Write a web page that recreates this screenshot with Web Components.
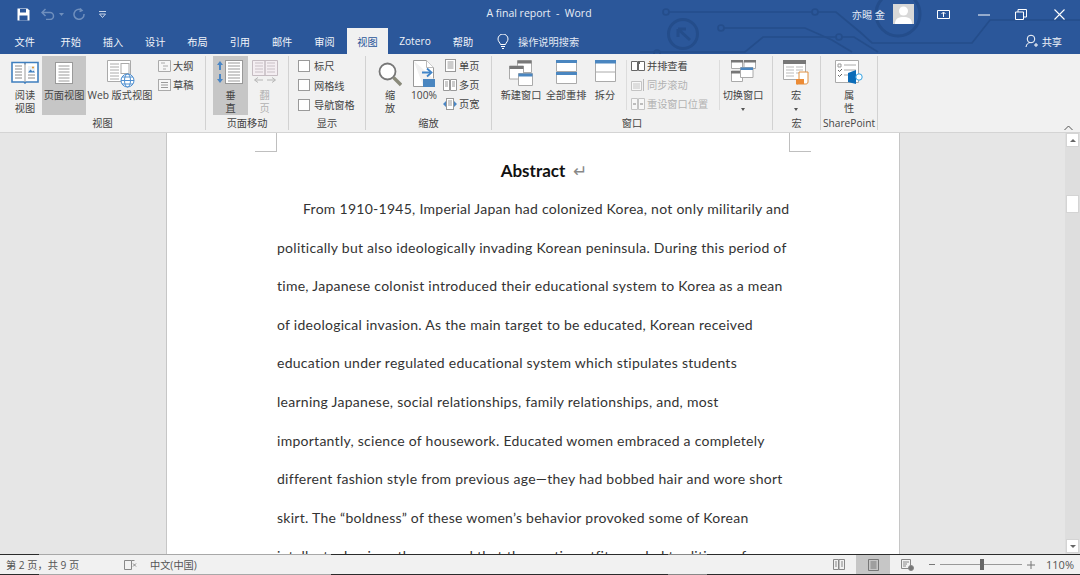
<!DOCTYPE html>
<html lang="zh"><head><meta charset="utf-8"><title>A final report - Word</title>
<style>
html,body{margin:0;padding:0;width:1080px;height:575px;overflow:hidden;background:#f1f1f1}
body{font-family:"Open Sans","Noto Sans CJK SC",sans-serif;color:#444;display:flex;flex-direction:column}
</style></head><body>
<w-header></w-header>
<w-ribbon></w-ribbon>
<w-doc></w-doc>
<w-status></w-status>
<script>
const ICONS={
read:`<svg width="28" height="24" viewBox="0 0 28 24"><path d="M1 2.500h12.500l.5 1 .5-1H27V22H15l-1 1-1-1H1z" fill="#fff" stroke="#3f7fbf" stroke-width="1.600"/><path d="M14 3v19" stroke="#999"/><path d="M4 6h7M4 9h7M4 12h7M4 15h7M4 18h7M17 15h7M17 18h7" stroke="#8a8a8a"/><rect x="17" y="6" width="7" height="6.500" fill="#e8f0f8"/><path d="M17 12.500l2.500-3 2 2 1-1 1.500 2z" fill="#3f7fbf"/><circle cx="22" cy="7.500" r="1.100" fill="#e29b3b"/></svg>`,
page:`<svg style="margin-top:2px" width="18" height="22" viewBox="0 0 18 22"><rect x=".5" y=".5" width="17" height="21" fill="#fff" stroke="#9a9a9a"/><path d="M3.500 4h11M3.500 7h11M3.500 10h11M3.500 13h11M3.500 16h11M3.500 19h11" stroke="#9a9a9a"/></svg>`,
web:`<svg style="margin-left:2px" width="28" height="28" viewBox="0 0 28 28"><path d="M.5.500h23v21H.5z" fill="#fff" stroke="#aaa"/><path d="M3 4h9M3 7h9M3 10h9M3 13h9M3 16h9M3 19h9" stroke="#aaa"/><rect x="14" y="3.500" width="8" height="10" fill="#fff" stroke="#aaa"/><circle cx="20.500" cy="20.500" r="6.500" fill="#fff" stroke="#4f8fd0"/><ellipse cx="20.500" cy="20.500" rx="3" ry="6.500" fill="none" stroke="#4f8fd0"/><path d="M14 20.500h13M15 17h11M15 24h11" stroke="#4f8fd0"/></svg>`,
outline:`<svg width="13" height="12" viewBox="0 0 13 12"><path d="M.5.500h12v11H.5z" fill="#f6f6f6" stroke="#aaa"/><path d="M3 3h4M5 6h5M5 9h3" stroke="#aaa"/></svg>`,
draft:`<svg width="13" height="12" viewBox="0 0 13 12"><rect x=".5" y=".5" width="12" height="11" fill="#f6f6f6" stroke="#aaa"/><path d="M3 3.500h7M3 6h7M3 8.500h7" stroke="#999"/></svg>`,
vert:`<svg width="29" height="24" viewBox="0 0 29 24"><rect x="9.500" y=".5" width="17" height="23" fill="#fff" stroke="#999"/><path d="M12 3h12M12 6h12M12 9h12M12 12h12M12 15h12M12 18h12M12 21h12" stroke="#999"/><path d="M4 1L7 5H5v5H3V5H1zM4 23l3-4H5v-5H3v5H1z" fill="#4a86c5"/></svg>`,
flip:`<svg width="26" height="24" viewBox="0 0 26 24"><path d="M.5.500h12.500v15H.5zM13 .5h12.500v15H13z" fill="#f4eef2" stroke="#c5bcc2"/><path d="M3 3h8M3 6h8M3 9h8M3 12h8M15 3h8M15 6h8M15 9h8M15 12h8" stroke="#c9c0c6"/><path d="M3 20h8M15 20h8M6 17.500L2.500 20 6 22.500M20 17.500l3.500 2.500-3.500 2.500" fill="none" stroke="#b5b5b5"/></svg>`,
zoom:`<svg style="margin-top:2px" width="24" height="26" viewBox="0 0 24 26"><circle cx="9.500" cy="9.500" r="8" fill="#fff" stroke="#777" stroke-width="1.800"/><path d="M15.500 15.500L23 23" stroke="#8a8a7a" stroke-width="3.400"/></svg>`,
p100:`<svg width="22" height="28" viewBox="0 0 22 28"><path d="M.5.500h13l7 7v11M.5.500v26h10" fill="#fff" stroke="#999"/><path d="M13.500.5v7h7" fill="#fff" stroke="#bbb"/><path d="M9 12.500h8" stroke="#3f84c8" stroke-width="2"/><path d="M14 8.500l4.500 4-4.500 4" fill="none" stroke="#3f84c8" stroke-width="1.800"/><rect x="10" y="19" width="12" height="8" fill="#4a86c0"/></svg>`,
single:`<svg width="11" height="13" viewBox="0 0 11 13"><rect x=".5" y=".5" width="10" height="12" fill="#fff" stroke="#999"/><path d="M2.500 3h6M2.500 5h6M2.500 7h6M2.500 9h6" stroke="#999"/></svg>`,
multi:`<svg width="14" height="12" viewBox="0 0 14 12"><path d="M.5.500h6v11h-6zM7.500.5h6v11h-6z" fill="#fff" stroke="#999"/><path d="M2 3h3M2 5h3M2 7h3M9 3h3M9 5h3M9 7h3" stroke="#999"/></svg>`,
width:`<svg width="14" height="12" viewBox="0 0 14 12"><rect x="3.500" y=".5" width="7" height="11" fill="#fff" stroke="#999"/><path d="M5 3h4M5 5h4M5 7h4" stroke="#999"/><path d="M3 3L0 6l3 3M11 3l3 3-3 3" fill="#4a86c5"/></svg>`,
newwin:`<svg width="24" height="26" viewBox="0 0 24 26"><path d="M8.500.5h14v12h-14z" fill="#fff" stroke="#aaa"/><path d="M8.500.5h14v3h-14z" fill="#777"/><path d="M.5 6h14v13H.5z" fill="#fff" stroke="#aaa"/><path d="M.5 6h14v3H.5z" fill="#777"/><path d="M9.500 13.500h14v12h-14z" fill="#fff" stroke="#aaa"/><path d="M9.500 13.500h14v3h-14z" fill="#4a86c0"/></svg>`,
arrange:`<svg width="21" height="24" viewBox="0 0 21 24"><path d="M.5.500h20v11H.5zM.5 12.500h20v11H.5z" fill="#fff" stroke="#aaa"/><path d="M0 0h21v3H0zM0 12h21v3H0z" fill="#4a86c0"/></svg>`,
split:`<svg width="21" height="22" viewBox="0 0 21 22"><path d="M.5.500h20v21H.5z" fill="#fff" stroke="#aaa"/><path d="M0 0h21v3.500H0z" fill="#4a86c0"/><path d="M0 12h21" stroke="#aaa"/></svg>`,
side:`<svg width="14" height="12" viewBox="0 0 14 12"><path d="M.5 1.500h6v9h-6zM7.500 1.500h6v9h-6z" fill="#fff" stroke="#666"/><path d="M7 1h2v3H7z" fill="#666"/></svg>`,
sync:`<svg width="14" height="14" viewBox="0 0 14 14"><path d="M.5 3.500h10v9H.5z" fill="#f7f7f7" stroke="#c4c4c4"/><path d="M2 6h7M2 8h7M2 10h7" stroke="#c4c4c4"/><path d="M12.500 1v12" stroke="#bbb"/></svg>`,
reset:`<svg width="14" height="12" viewBox="0 0 14 12"><path d="M.5.500h6v11h-6zM7.500.5h6v11h-6z" fill="#f7f7f7" stroke="#c4c4c4"/><path d="M2 6h3M12 6H9" stroke="#aaa" stroke-width="1.500"/></svg>`,
switchw:`<svg width="25" height="22" viewBox="0 0 25 22"><path d="M.5.500h11v8H.5zM13 .5h11.500v8H13z" fill="#fff" stroke="#aaa"/><path d="M0 0h12v2.500H0zM13 0h12v2.500H13z" fill="#777"/><path d="M.5 11h11v10.500H.5z" fill="#fff" stroke="#aaa"/><path d="M0 11h12v2.500H0z" fill="#777"/><path d="M9.500 7.500h12.500v10H9.500z" fill="#fff" stroke="#aaa"/><path d="M9.500 7.500H22V10H9.500z" fill="#4a86c0"/></svg>`,
macro:`<svg width="27" height="25" viewBox="0 0 27 25"><path d="M.5.500h22v19H.5z" fill="#fff" stroke="#aaa"/><path d="M0 0h23v4H0z" fill="#777"/><path d="M3 7h8M13 7h7M3 10h8M13 10h7M3 13h8M13 13h7M3 16h8" stroke="#bbb"/><path d="M16 12h9v10c0 2-2 2-3 2h-8.500c2 0 2.500-1 2.500-2z" fill="#fff" stroke="#e09040"/><path d="M13 19h8v5h-8z" fill="#ec8b35"/></svg>`,
prop:`<svg width="28" height="25" viewBox="0 0 28 25"><path d="M.5.500h23v22H.5z" fill="#fff" stroke="#aaa"/><path d="M3 4h3v3H3z" fill="none" stroke="#999"/><path d="M9 5h12M9 10h12M9 15h6" stroke="#aaa"/><path d="M3 10l1.500 1.500L7 9M3 15l1.500 1.500L7 14" fill="none" stroke="#666"/><path d="M13 13l8-3v14l-8-2z" fill="#0b6cb8"/><circle cx="24" cy="17" r="3.200" fill="#fff" stroke="#36a3e3"/></svg>`
};
function def(name,css,html){
  customElements.define(name,class extends HTMLElement{
    connectedCallback(){
      if(this.shadowRoot)return;
      const r=this.attachShadow({mode:"open"});
      r.innerHTML=`<style>${css}</style>`+(typeof html==="function"?html(this):html);
    }
  });
}
def("w-ico",":host{display:inline-flex;line-height:0}",h=>ICONS[h.getAttribute("name")]||"");

def("w-big",`:host{display:flex;flex-direction:column;align-items:center;height:59px;box-sizing:border-box;padding-top:4px;font-size:10.200px;line-height:13px;text-align:center;flex:none}
:host([on]){background:#c6c6c6}:host([dim]){color:#b1b1b1}
.i{height:26px;display:flex;align-items:flex-start;justify-content:center}
.t{margin-top:3px;white-space:pre}
.car{width:0;height:0;border:2px solid transparent;border-top:3px solid #555;border-bottom:0;margin-top:6px}`,
h=>`<div class="i"><w-ico name="${h.getAttribute("icon")}"></w-ico></div><div class="t"><slot></slot></div>${h.hasAttribute("caret")?'<div class="car"></div>':''}`);

def("w-small",`:host{display:flex;align-items:center;gap:2px;height:19px;font-size:10.200px;white-space:nowrap}
:host([dim]){color:#b1b1b1}.i{width:14px;display:flex;justify-content:center}`,
h=>`<div class="i"><w-ico name="${h.getAttribute("icon")}"></w-ico></div><slot></slot>`);

def("w-check",`:host{display:flex;align-items:center;gap:4px;height:19.500px;font-size:10.200px;white-space:nowrap}
.b{width:10px;height:10px;border:1px solid #9a9a9a;background:#fff;flex:none}`,
`<div class="b"></div><slot></slot>`);

def("w-group",`:host{display:flex;flex-direction:column;box-sizing:border-box;flex:none;height:74px;margin-top:2px;border-right:1px solid #d2d2d2}
.c{flex:1;display:flex;min-height:0;align-items:flex-start}
.l{height:14px;font-size:10.200px;line-height:14px;padding-top:3px;margin-top:1px;text-align:center;white-space:nowrap}`,
h=>`<div class="c"><slot></slot></div><div class="l">${h.getAttribute("label")}</div>`);

def("w-col",`:host{display:flex;flex-direction:column;flex:none}`,`<slot></slot>`);
def("w-vsep",`:host{display:block;width:1px;height:50px;background:#dcdcdc;flex:none;margin-top:4px}`,``);

def("w-header",`:host{display:block;position:relative;height:54px;background:#2b579a;color:#fff;flex:none;overflow:hidden}
.bg{position:absolute;left:0;top:0}
.top{position:relative;display:flex;align-items:center;height:28px}
.qat{display:flex;align-items:center;width:300px;padding-left:17px;box-sizing:border-box}
.title{position:absolute;left:0;right:0;top:0;height:27px;line-height:27px;text-align:center;font-size:10.500px;color:#e9eef6;padding-right:2px;box-sizing:border-box}
.right{margin-left:auto;display:flex;align-items:center;height:28px}
.user{font-size:10.200px;margin-right:8px;color:#e4ebf5}
.av{width:21px;height:20px;background:#d6d6d6;margin-right:23px;display:block;overflow:hidden}
.tabs{position:relative;display:flex;height:26px;align-items:stretch;font-size:10.200px}
.tabs>span{display:flex;align-items:center;justify-content:center;width:42.300px;color:#f1f4f9;white-space:nowrap}
.tabs>span.sel{background:#f1f1f1;color:#2b579a;width:41px;margin-left:1.400px}
.share{margin-left:auto;display:flex;align-items:center;gap:4px;margin-right:18px;color:#f1f4f9}
.tell{display:flex;align-items:center;gap:9px;margin-left:13px;color:#e3e9f3}`,
`<svg class="bg" width="1080" height="54" viewBox="0 0 1080 54" fill="none" stroke="#244d8b" stroke-width="1.700">
<circle cx="683" cy="34" r="14.500" stroke-width="3"/><path d="M678 29h8M678 29v8M678 29l12 11" stroke-width="3"/>
<circle cx="666" cy="12" r="3"/><path d="M669 12h143"/><circle cx="815" cy="12" r="3"/><path d="M818 12h18l24 20 12 11h100l18-23h90"/>
<circle cx="721" cy="28" r="3"/><path d="M724 28h81l27 12 20 12"/>
<path d="M640 52h105l18-15h73"/><circle cx="839" cy="37" r="3"/><path d="M842 37h12l24 15"/><circle cx="657" cy="53" r="3"/>
<circle cx="898" cy="14" r="22" stroke-width="3"/></svg>
<div class="top"><div class="qat">
<svg width="13" height="13" viewBox="0 0 13 13"><path d="M.5.500h10l2 2v10H.5z" fill="#fff"/><path d="M3 1h6v3.500H3z" fill="#2b579a"/><path d="M2.500 7.500h8v5h-8z" fill="#2b579a"/></svg>
<svg style="margin-left:11px" width="14" height="12" viewBox="0 0 14 12" fill="none" stroke="#6f8fbd" stroke-width="1.500"><path d="M1 4.500h8a3.500 3.500 0 0 1 0 7H5M4.500 1L1 4.500 4.500 8"/></svg>
<svg style="margin-left:4px" width="5" height="3" viewBox="0 0 5 3"><path d="M0 0h5L2.500 3z" fill="#6f8fbd"/></svg>
<svg style="margin-left:9px" width="12" height="12" viewBox="0 0 12 12" fill="none" stroke="#6f8fbd" stroke-width="1.500"><path d="M8.500 2A5 5 0 1 0 11 6M7 .5l2 2-2.500 1"/></svg>
<svg style="margin-left:13px" width="9" height="9" viewBox="0 0 9 9" fill="none" stroke="#c9d5e7"><path d="M1 1.500h7"/><path d="M1.500 4h6L4.500 7.500z"/></svg>
</div>
<div class="title">A final report&nbsp; -&nbsp; Word</div>
<div class="right"><span class="user">亦晹 金</span>
<svg class="av" viewBox="0 0 21 20"><rect width="21" height="20" fill="#d8d8d8"/><circle cx="10.500" cy="7" r="4.500" fill="#fff"/><path d="M2 20c0-6 4-7 8.500-7s8.500 1 8.500 7z" fill="#fff"/></svg>
<svg width="13" height="11" viewBox="0 0 13 11" fill="none" stroke="#fff"><path d="M.5 1.500h12v8H.5z"/><path d="M6.500 8V3.500M4.500 5l2-2 2 2"/></svg>
<svg style="margin-left:27px" width="13" height="11" viewBox="0 0 13 11" stroke="#fff"><path d="M1 6h12"/></svg>
<svg style="margin-left:25px" width="12" height="11" viewBox="0 0 12 11" fill="none" stroke="#fff"><path d="M.5 3h8v7.500h-8zM3 3V.5h8.500V8H8.500"/></svg>
<svg style="margin-left:27px;margin-right:15px" width="11" height="11" viewBox="0 0 11 11" stroke="#fff" stroke-width="1.100"><path d="M.5.500l10 10M10.500.5l-10 10"/></svg>
</div></div>
<div class="tabs">
<span style="width:49.500px">文件</span><span>开始</span><span>插入</span><span>设计</span><span>布局</span><span>引用</span><span>邮件</span><span>审阅</span>
<span class="sel">视图</span><span style="width:54px">Zotero</span><span style="width:42px">帮助</span>
<div class="tell"><svg width="12" height="15" viewBox="0 0 12 15" fill="none" stroke="#fff"><path d="M3.500 10.500C3 8.500 1 7.500 1 5a5 5 0 0 1 10 0c0 2.500-2 3.500-2.500 5.500zM4 12.500h4M5 14.500h2"/></svg><div>操作说明搜索</div></div>
<div class="share"><svg width="13" height="14" viewBox="0 0 13 14" fill="none" stroke="#fff"><circle cx="6" cy="5" r="3.800"/><path d="M1 13c.5-3 2-4 4-4.500M9 11h4M11 9v4"/></svg>共享</div>
</div>`);

def("w-ribbon",`:host{display:flex;height:78px;background:#f1f1f1;border-bottom:1px solid #d4d4d4;flex:none;position:relative}
.chev{position:absolute;right:7px;bottom:1px}`,
`<w-group label="视图" style="width:206px">
 <w-big icon="read" style="width:34px;margin-left:8px">阅读
视图</w-big>
 <w-big icon="page" on style="width:44px">页面视图</w-big>
 <w-big icon="web" style="width:68px">Web 版式视图</w-big>
 <w-col style="margin-left:3px"><w-small icon="outline">大纲</w-small><w-small icon="draft">草稿</w-small></w-col>
</w-group>
<w-group label="页面移动" style="width:83px">
 <w-big icon="vert" on style="width:35px;margin-left:7px">垂
直</w-big>
 <w-big icon="flip" dim style="width:33px">翻
页</w-big>
</w-group>
<w-group label="显示" style="width:77px">
 <w-col style="margin-left:9px"><w-check>标尺</w-check><w-check>网格线</w-check><w-check>导航窗格</w-check></w-col>
</w-group>
<w-group label="缩放" style="width:126px">
 <w-big icon="zoom" style="width:26px;margin-left:11px">缩
放</w-big>
 <w-big icon="p100" style="width:30px;margin-left:6px">100%</w-big>
 <w-col style="margin-left:4px"><w-small icon="single">单页</w-small><w-small icon="multi">多页</w-small><w-small icon="width">页宽</w-small></w-col>
</w-group>
<w-group label="窗口" style="width:281px">
 <w-big icon="newwin" style="width:42px;margin-left:8px">新建窗口</w-big>
 <w-big icon="arrange" style="width:42px;margin-left:3px">全部重排</w-big>
 <w-big icon="split" style="width:32px;margin-left:2px">拆分</w-big>
 <w-vsep style="margin-left:5px"></w-vsep>
 <w-col style="margin-left:4px;width:88px"><w-small icon="side">并排查看</w-small><w-small icon="sync" dim>同步滚动</w-small><w-small icon="reset" dim>重设窗口位置</w-small></w-col>
 <w-vsep></w-vsep>
 <w-big icon="switchw" caret style="width:42px;margin-left:2px">切换窗口</w-big>
</w-group>
<w-group label="宏" style="width:48px">
 <w-big icon="macro" caret style="width:30px;margin-left:8px">宏</w-big>
</w-group>
<w-group label="SharePoint" style="width:57px">
 <w-big icon="prop" style="width:30px;margin-left:13px">属
性</w-big>
</w-group>
<svg class="chev" width="9" height="6" viewBox="0 0 9 6" fill="none" stroke="#555"><path d="M.5 5L4.500 1l4 4"/></svg>`);

def("w-page",`:host{display:block;position:relative;width:734px;margin-left:166px;height:100%;box-sizing:border-box;background:#fff;border:solid #c6c6c6;border-width:0 1px;padding:0 110px;overflow:hidden;color:#333;font-family:"Lato","Noto Sans",sans-serif}
h1{margin:0;padding-top:28px;height:20px;line-height:20px;font-size:17px;font-weight:700;text-align:center;color:#111;position:relative}
h1 span{position:absolute;left:296px;top:28px;color:#888;font-weight:400;font-family:"DejaVu Sans";font-size:17px}
p{margin:0;padding-top:9px;font-size:14px;letter-spacing:.27px;line-height:38.600px;white-space:nowrap}
.in{padding-left:26px}span.l{display:block}
.m{position:absolute;top:0;width:21px;height:18px;border-bottom:1px solid #bfbfbf}
.m.a{left:88px;border-right:1px solid #bfbfbf}.m.b{left:622px;border-left:1px solid #bfbfbf}`,
`<div class="m a"></div><div class="m b"></div>
<h1>Abstract <span>↵</span></h1>
<p><span class="l in">From 1910-1945, Imperial Japan had colonized Korea, not only militarily and</span>
<span class="l">politically but also ideologically invading Korean peninsula. During this period of</span>
<span class="l">time, Japanese colonist introduced their educational system to Korea as a mean</span>
<span class="l">of ideological invasion. As the main target to be educated, Korean received</span>
<span class="l">education under regulated educational system which stipulates students</span>
<span class="l">learning Japanese, social relationships, family relationships, and, most</span>
<span class="l">importantly, science of housework. Educated women embraced a completely</span>
<span class="l">different fashion style from previous age—they had bobbed hair and wore short</span>
<span class="l">skirt. The “boldness” of these women’s behavior provoked some of Korean</span>
<span class="l">intellectuals, since they argued that the exotic outfits eroded traditions of</span></p>`);

def("w-doc",`:host{display:flex;flex:1;min-height:0;background:#e6e6e6;overflow:hidden}
.w{flex:1;min-width:0}
.sb{width:15px;flex:none;background:#dedede;display:flex;flex-direction:column;box-sizing:border-box;padding:0 1px 1px 1px}
.btn{height:14px;background:#fff;border:1px solid #d4d4d4;box-sizing:border-box;display:flex;align-items:center;justify-content:center}
.thumb{height:18px;background:#fff;border:1px solid #d4d4d4;box-sizing:border-box;margin-top:48px}
.sp{flex:1}
.up{border:3px solid transparent;border-bottom:3px solid #666;border-top:0;width:0;height:0}
.dn{border:3px solid transparent;border-top:3px solid #666;border-bottom:0;width:0;height:0}`,
`<div class="w"><w-page></w-page></div>
<div class="sb"><div class="btn"><div class="up"></div></div><div class="thumb"></div><div class="sp"></div><div class="btn"><div class="dn"></div></div></div>`);

def("w-status",`:host{display:flex;align-items:stretch;height:19px;flex:none;background:#f1f1f1;border-top:1px solid #d4d4d4;border-bottom:1px solid #333;border-image:linear-gradient(90deg,#2b2b2b 40px,#a8a8a8 40px,#a8a8a8 331px,#2b2b2b 331px,#2b2b2b 668px,#888 668px,#888 707px,#2b2b2b 707px) 1;font-size:10.200px;color:#555;white-space:nowrap}
.a{display:flex;align-items:center;padding-left:6px}
.r{margin-left:auto;display:flex;align-items:center;height:100%}
.sel{background:#c6c6c6;width:34px;height:100%;display:flex;align-items:center;justify-content:center;margin:0 11px}
.slider{position:relative;width:82px;height:1px;background:#999;margin:0 5px}
.slider i{position:absolute;left:40px;top:-5px;width:4px;height:11px;background:#666}
.z{margin:0 6px 0 11px;font-size:11px}`,
`<div class="a"><span style="width:118px">第 2 页，共 9 页</span>
<svg width="13" height="12" viewBox="0 0 13 12" fill="none" stroke="#888"><path d="M.5 1.500h7v9h-7zM7.500 1.500h3"/><path d="M9 4.500l3 3M12 4.500l-3 3"/></svg>
<span style="margin-left:13px">中文(中国)</span></div>
<div class="r">
<svg width="12" height="11" viewBox="0 0 12 11" fill="none" stroke="#888"><path d="M.5.500h5v10h-5zM6 .5h5.500v10H6zM2 3h2M2 5h2M2 7h2M8 3h2M8 5h2M8 7h2"/></svg>
<div class="sel"><svg width="11" height="12" viewBox="0 0 11 12" fill="none" stroke="#777"><path d="M.5.500h10v11H.5zM2.500 3h6M2.500 5h6M2.500 7h6M2.500 9h6"/></svg></div>
<svg width="13" height="12" viewBox="0 0 13 12" fill="none" stroke="#888"><path d="M.5.500h9v9h-9zM2 3h6M2 5h4M2 7h3"/><circle cx="10" cy="9" r="2.500" fill="#777"/></svg>
<svg style="margin-left:15px" width="6" height="1"><rect width="6" height="1" fill="#777"/></svg>
<div class="slider"><i></i></div>
<svg width="8" height="8" viewBox="0 0 8 8" stroke="#777"><path d="M0 4h8M4 0v8"/></svg>
<span class="z">110%</span></div>`);
</script>
</body></html>
